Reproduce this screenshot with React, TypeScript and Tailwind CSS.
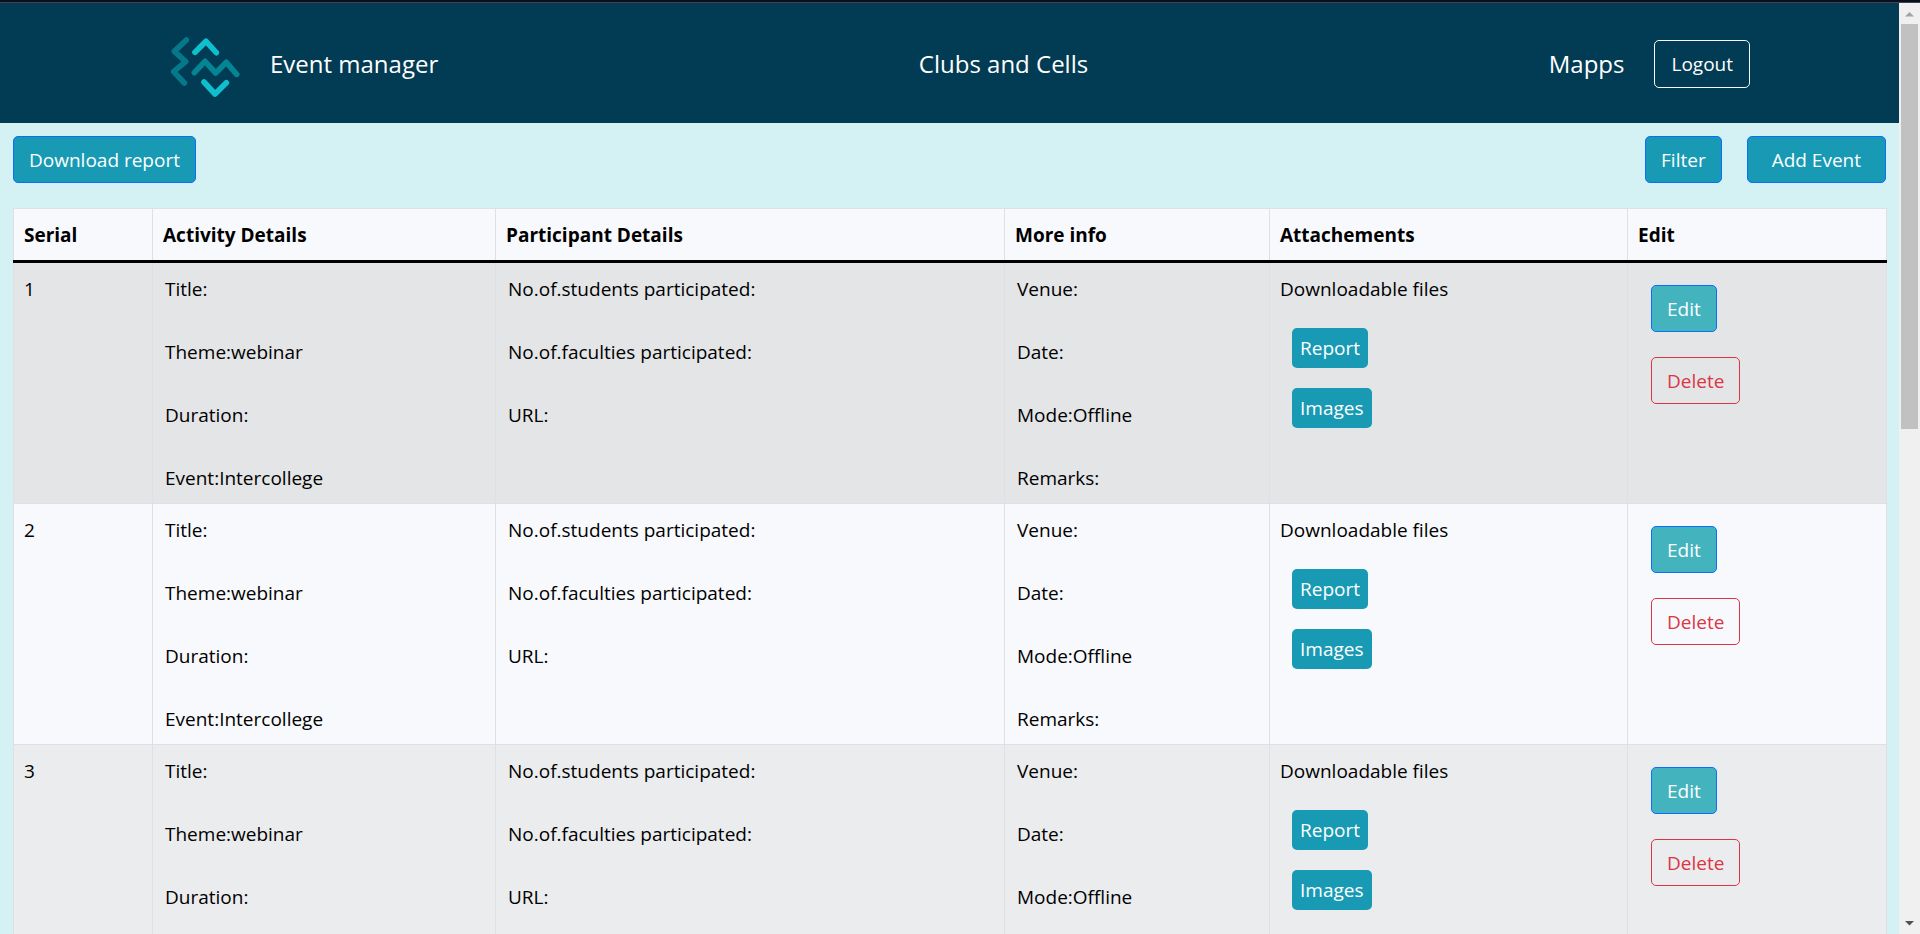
import React from "react";

type EventRecord = {
  serial: number;
  title: string;
  theme: string;
  duration: string;
  event: string;
  students: string;
  faculties: string;
  url: string;
  venue: string;
  date: string;
  mode: string;
  remarks: string;
};

const events: EventRecord[] = [1, 2, 3].map((serial) => ({
  serial,
  title: "",
  theme: "webinar",
  duration: "",
  event: "Intercollege",
  students: "",
  faculties: "",
  url: "",
  venue: "",
  date: "",
  mode: "Offline",
  remarks: "",
}));

const button = "h-[47px] cursor-pointer rounded-[5px] border";
const primaryButton = `${button} border-[#0d6efd] bg-[#189ab4] text-white`;
const fileButton = "h-10 cursor-pointer rounded-[5px] bg-[#189ab4] px-2 text-white";

function Logo() {
  return (
    <svg
      viewBox="0 0 270 225"
      className="h-[75px] w-[90px]"
      fill="none"
      strokeWidth="17"
      strokeLinecap="round"
      strokeLinejoin="round"
      aria-hidden="true"
    >
      <path stroke="#057889" d="M79 30 43 64 77 95 41 125 73 159" />
      <path stroke="#0fbfcd" d="M105 67 138 34 169 68" />
      <path stroke="#048593" d="M103 128 135 94 167 129 199 97 230 133" />
      <path stroke="#0fbfcd" d="M132 156 165 192 199 158" />
    </svg>
  );
}

function Header() {
  return (
    <header className="flex h-[120px] items-center justify-between bg-[#023b54] pt-[2px] pr-[149px] pl-[160px] text-[24px] leading-8 text-white">
      <div className="flex items-center gap-5 pr-5">
        <div className="pt-1.5">
          <Logo />
        </div>
        <a href="#events">Event manager</a>
      </div>
      <a href="#clubs">Clubs and Cells</a>
      <div className="flex items-center gap-[30px]">
        <a href="#mapps">Mapps</a>
        <button
          type="button"
          className="h-12 cursor-pointer rounded-[5px] border border-[#f8f9fa] px-4 text-[19px]"
        >
          Logout
        </button>
      </div>
    </header>
  );
}

function Details({ lines }: { lines: string[] }) {
  return (
    <div className="flex flex-col gap-[33px] px-0.5">
      {lines.map((line) => (
        <p key={line}>{line}</p>
      ))}
    </div>
  );
}

const cell = "border border-[#dee0e1] px-[10px] pt-[11px] pb-[10px] text-left align-top";
const head = "border border-b-[3px] border-[#dee0e1] border-b-black px-[10px] text-left font-bold";

function EventRow({ item, active }: { item: EventRecord; active: boolean }) {
  const background = active
    ? "bg-[#e4e5e7]"
    : item.serial % 2 === 1
      ? "bg-[#ebecee]"
      : "bg-[#f8f9fc]";
  return (
    <tr className={background}>
      <td className={cell}>{item.serial}</td>
      <td className={cell}>
        <Details
          lines={[
            `Title:${item.title}`,
            `Theme:${item.theme}`,
            `Duration:${item.duration}`,
            `Event:${item.event}`,
          ]}
        />
      </td>
      <td className={cell}>
        <Details
          lines={[
            `No.of.students participated:${item.students}`,
            `No.of.faculties participated:${item.faculties}`,
            `URL:${item.url}`,
          ]}
        />
      </td>
      <td className={cell}>
        <Details
          lines={[
            `Venue:${item.venue}`,
            `Date:${item.date}`,
            `Mode:${item.mode}`,
            `Remarks:${item.remarks}`,
          ]}
        />
      </td>
      <td className={cell}>
        <p>Downloadable files</p>
        <div className="mt-6 ml-3 flex flex-col items-start gap-5">
          <button type="button" className={fileButton}>
            Report
          </button>
          <button type="button" className={fileButton}>
            Images
          </button>
        </div>
      </td>
      <td className={cell}>
        <div className="mt-[11px] ml-[13px] flex flex-col items-start gap-[25px]">
          <button
            type="button"
            className={`${button} border-[#0d6efd] bg-[#43b3be] px-[15px] text-white`}
          >
            Edit
          </button>
          <button
            type="button"
            className={`${button} border-[#dc3545] px-[15px] text-[#dc3545]`}
          >
            Delete
          </button>
        </div>
      </td>
    </tr>
  );
}

function ScrollTrack() {
  return (
    <div className="flex w-[21px] shrink-0 flex-col items-center bg-[#f0f0f0]" aria-hidden="true">
      <svg viewBox="0 0 21 21" className="h-[21px] w-[21px] shrink-0">
        <path d="M6 13.5 10.5 9 15 13.5Z" fill="#a3a3a3" />
      </svg>
      <div className="flex w-full flex-1 justify-center">
        <div className="h-[45.6%] w-[17px] bg-[#c1c1c1]" />
      </div>
      <svg viewBox="0 0 21 21" className="h-[21px] w-[21px] shrink-0">
        <path d="M6 8 10.5 12.5 15 8Z" fill="#505050" />
      </svg>
    </div>
  );
}

export default function App() {
  return (
    <div className="flex h-screen flex-col overflow-hidden border-t-2 border-[#0a0f1e] bg-[#d4f1f4] font-['Open_Sans','Noto_Sans',sans-serif] text-[19px] leading-[30px] text-black">
      <div className="flex min-h-0 flex-1 border-t border-[#43424f]">
        <div className="min-w-0 flex-1 overflow-y-auto [scrollbar-width:none]">
          <Header />
          <main className="px-[13px] pt-[13px]">
            <div className="flex items-center justify-between">
              <button type="button" className={`${primaryButton} px-[15px]`}>
                Download report
              </button>
              <div className="flex gap-[25px]">
                <button type="button" className={`${primaryButton} px-[15px]`}>
                  Filter
                </button>
                <button type="button" className={`${primaryButton} px-6`}>
                  Add Event
                </button>
              </div>
            </div>
            <table className="mt-[25px] w-full table-fixed border-collapse bg-[#f8f9fc]">
              <colgroup>
                <col className="w-[139px]" />
                <col className="w-[343px]" />
                <col className="w-[509px]" />
                <col className="w-[265px]" />
                <col className="w-[358px]" />
                <col className="w-[259px]" />
              </colgroup>
              <thead>
                <tr className="h-[53px]">
                  <th scope="col" className={head}>Serial</th>
                  <th scope="col" className={head}>Activity Details</th>
                  <th scope="col" className={head}>Participant Details</th>
                  <th scope="col" className={head}>More info</th>
                  <th scope="col" className={head}>Attachements</th>
                  <th scope="col" className={head}>Edit</th>
                </tr>
              </thead>
              <tbody>
                {events.map((item) => (
                  <EventRow key={item.serial} item={item} active={item.serial === 1} />
                ))}
              </tbody>
            </table>
          </main>
        </div>
        <ScrollTrack />
      </div>
    </div>
  );
}
